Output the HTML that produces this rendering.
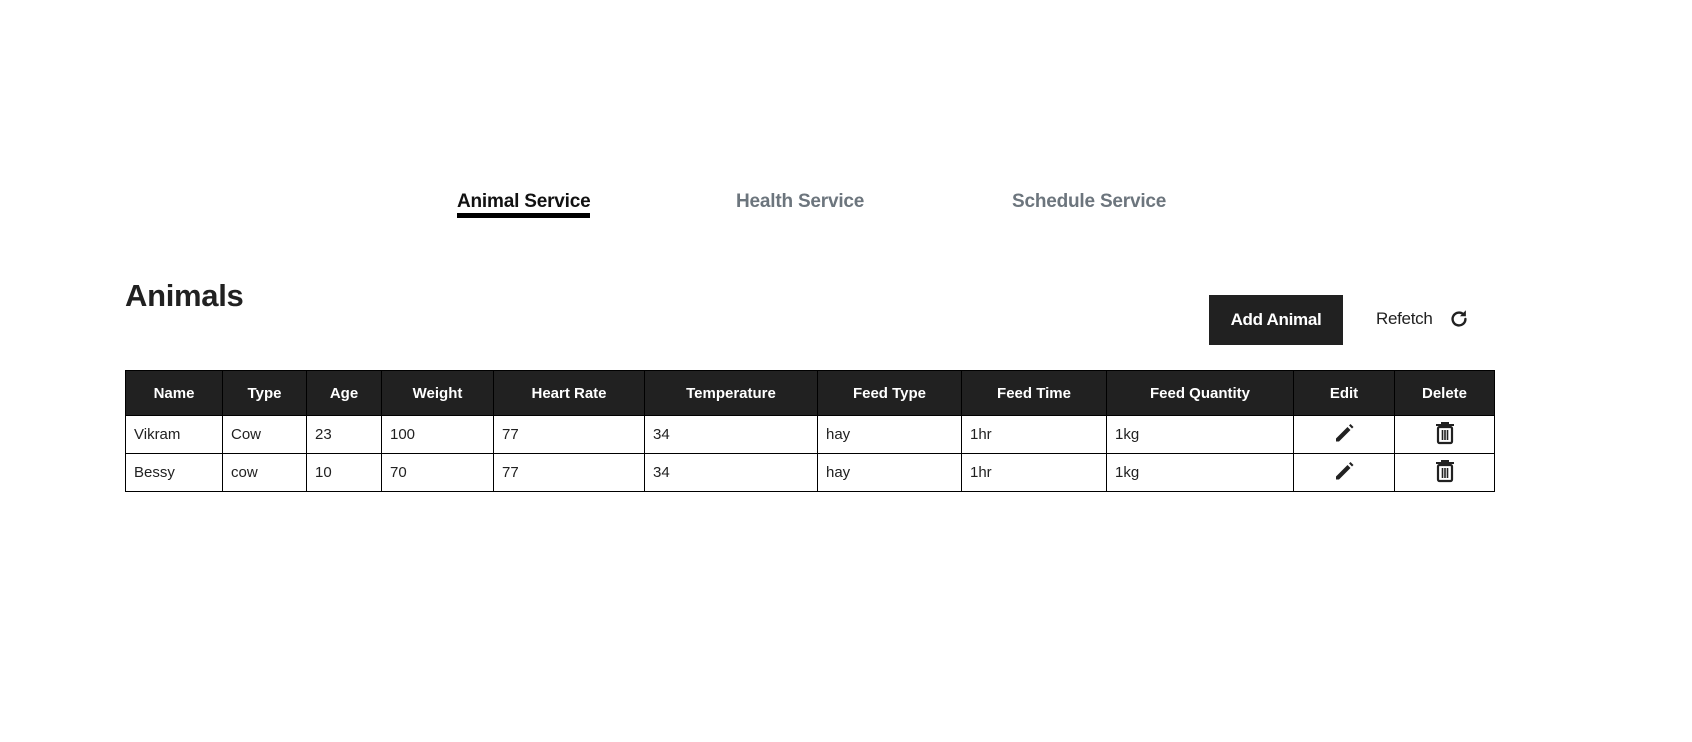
<!DOCTYPE html>
<html><head><meta charset="utf-8"><style>
body{margin:0;width:1692px;height:742px;background:#fff;font-family:"Liberation Sans",sans-serif;color:#212121;position:relative;overflow:hidden}
.nav{position:absolute;top:191px;font-size:19px;font-weight:bold;color:#6c757d;letter-spacing:-0.2px}
.nav.a{color:#111;border-bottom:5px solid #000;line-height:22px}
h1{position:absolute;left:125px;top:278px;margin:0;font-size:31px;font-weight:bold;letter-spacing:-0.3px}
.btn{position:absolute;left:1209px;top:295px;width:134px;height:50px;background:#212121;color:#fff;font-size:17px;font-weight:bold;display:flex;align-items:center;justify-content:center;letter-spacing:-0.3px}
.ref{position:absolute;left:1376px;top:309px;font-size:17px;letter-spacing:-0.3px}
table{position:absolute;left:125px;top:370px;border-collapse:collapse;font-size:15px;table-layout:fixed}
th{background:#212121;color:#fff;height:44px;border:1px solid #000;font-weight:bold;text-align:center;padding:0}
td{height:37px;border:1px solid #000;padding:0 0 0 8px}
td.i{text-align:center;padding:0}
</style></head><body>
<div class="nav a" style="left:457px">Animal Service</div>
<div class="nav" style="left:736px">Health Service</div>
<div class="nav" style="left:1012px">Schedule Service</div>
<h1>Animals</h1>
<div class="btn">Add Animal</div>
<div class="ref">Refetch</div>
<svg style="position:absolute;left:1448px;top:308px" width="22" height="22" viewBox="0 0 24 24"><path d="M19 12a7 7 0 1 1-2.1-5" fill="none" stroke="#212121" stroke-width="2.6" stroke-linecap="round"/><path d="M19.5 2.5v6.5h-6.5z" fill="#212121"/></svg>
<table>
<colgroup><col style="width:97px"><col style="width:84px"><col style="width:75px"><col style="width:112px"><col style="width:151px"><col style="width:173px"><col style="width:144px"><col style="width:145px"><col style="width:187px"><col style="width:101px"><col style="width:100px"></colgroup>
<tr><th>Name</th><th>Type</th><th>Age</th><th>Weight</th><th>Heart Rate</th><th>Temperature</th><th>Feed Type</th><th>Feed Time</th><th>Feed Quantity</th><th>Edit</th><th>Delete</th></tr>
<tr><td>Vikram</td><td>Cow</td><td>23</td><td>100</td><td>77</td><td>34</td><td>hay</td><td>1hr</td><td>1kg</td>
<td class="i"><svg width="24" height="24" viewBox="0 0 24 24"><path d="M4 17.5L15.5 6l3 3L7 20.5H4z" fill="#212121"/><path d="M17 4.5l1.5-1.5 3 3-1.5 1.5z" fill="#212121"/></svg></td>
<td class="i"><svg width="22" height="24" viewBox="0 0 22 24"><path d="M2 4h18M8 4V2h6v2" stroke="#212121" stroke-width="2" fill="none"/><rect x="4" y="6" width="14" height="16" rx="1.5" fill="none" stroke="#212121" stroke-width="2.2"/><path d="M8.5 9v10M11 9v10M13.5 9v10" stroke="#212121" stroke-width="1.6"/></svg></td></tr>
<tr><td>Bessy</td><td>cow</td><td>10</td><td>70</td><td>77</td><td>34</td><td>hay</td><td>1hr</td><td>1kg</td>
<td class="i"><svg width="24" height="24" viewBox="0 0 24 24"><path d="M4 17.5L15.5 6l3 3L7 20.5H4z" fill="#212121"/><path d="M17 4.5l1.5-1.5 3 3-1.5 1.5z" fill="#212121"/></svg></td>
<td class="i"><svg width="22" height="24" viewBox="0 0 22 24"><path d="M2 4h18M8 4V2h6v2" stroke="#212121" stroke-width="2" fill="none"/><rect x="4" y="6" width="14" height="16" rx="1.5" fill="none" stroke="#212121" stroke-width="2.2"/><path d="M8.5 9v10M11 9v10M13.5 9v10" stroke="#212121" stroke-width="1.6"/></svg></td></tr>
</table>
</body></html>
